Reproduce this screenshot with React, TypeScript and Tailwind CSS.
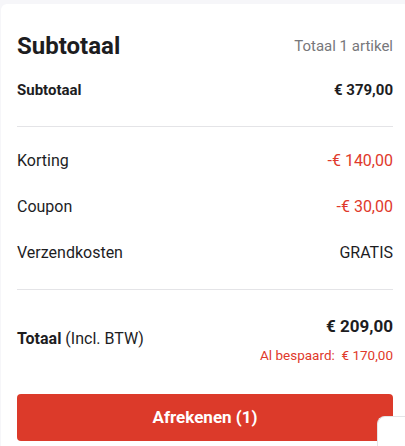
const RED = "text-[#e0392b]";

function Row({ label, value, valueClass }: { label: string; value: string; valueClass?: string }) {
  return (
    <div className="flex h-[46px] items-center justify-between text-[16px] leading-5 text-[#1d1d1f]">
      <span>{label}</span>
      <span className={valueClass}>{value}</span>
    </div>
  );
}

export default function App() {
  return (
    <div
      className="relative h-[446px] overflow-hidden bg-[#f6f6f9] pt-1 pl-px"
      style={{ fontFamily: "Roboto, 'Noto Sans', sans-serif" }}
    >
      <div className="h-[460px] w-[408px] rounded-t-md bg-white px-4">
        {/* header */}
        <div className="flex items-center justify-between pt-[26px]">
          <h2 className="text-[24px] font-bold leading-8 text-[#1d1d1f]">Subtotaal</h2>
          <span className="text-[15px] text-[#77777b]">Totaal 1 artikel</span>
        </div>
        <div className="mt-[18px] flex items-center justify-between border-b border-[#e4e4e7] pb-[26px] text-[15px] font-bold leading-5 text-[#1d1d1f]">
          <span>Subtotaal</span>
          <span>€ 379,00</span>
        </div>

        {/* discounts */}
        <div className="border-b border-[#e4e4e7] pt-[11px] pb-[13px]">
          <Row label="Korting" value="-€ 140,00" valueClass={RED} />
          <Row label="Coupon" value="-€ 30,00" valueClass={RED} />
          <Row label="Verzendkosten" value="GRATIS" />
        </div>

        {/* total */}
        <div className="flex items-center justify-between pt-6">
          <div className="text-[16px] text-[#1d1d1f]">
            <span className="font-bold">Totaal</span> (Incl. BTW)
          </div>
          <div className="text-right">
            <div className="text-[17px] font-bold leading-6 text-[#1d1d1f]">€ 209,00</div>
            <div className={`mt-[9px] text-[13.5px] leading-4 ${RED}`}>
              Al bespaard:&nbsp;&nbsp;€ 170,00
            </div>
          </div>
        </div>

        <button className="mt-[31px] flex h-[47px] w-full items-center justify-center rounded bg-[#dc3a2a] text-[17px] font-bold text-white">
          Afrekenen (1)
        </button>
      </div>

      {/* floating widget corner */}
      <div className="absolute top-[416px] left-[377px] h-10 w-10 rounded-tl-lg border-t border-l border-[#e4e4e7] bg-white" />
    </div>
  );
}
